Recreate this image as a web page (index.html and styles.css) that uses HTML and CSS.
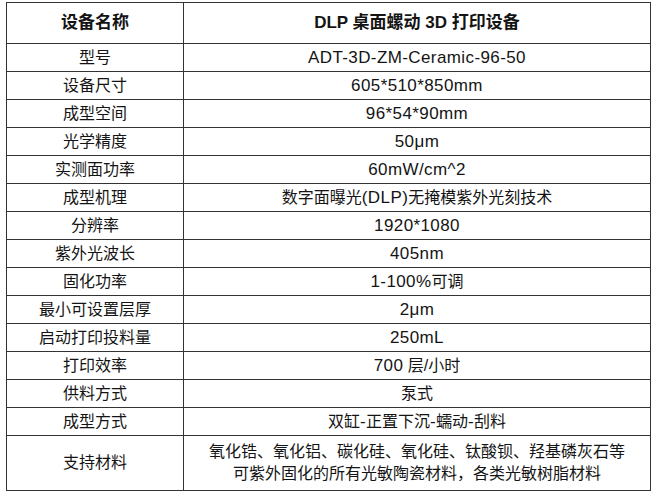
FILE: index.html
```html
<!DOCTYPE html>
<html lang="zh">
<head>
<meta charset="utf-8">
<link rel="stylesheet" href="styles.css">
</head>
<body>
<table class="spec">
  <tr class="head"><th class="k">设备名称</th><th class="v">DLP 桌面螺动 3D 打印设备</th></tr>
  <tr><td class="k">型号</td><td class="v"><span class="en">ADT-3D-ZM-Ceramic-96-50</span></td></tr>
  <tr><td class="k">设备尺寸</td><td class="v"><span class="en">605*510*850mm</span></td></tr>
  <tr><td class="k">成型空间</td><td class="v"><span class="en">96*54*90mm</span></td></tr>
  <tr><td class="k">光学精度</td><td class="v"><span class="en">50μm</span></td></tr>
  <tr><td class="k">实测面功率</td><td class="v"><span class="en">60mW/cm^2</span></td></tr>
  <tr><td class="k">成型机理</td><td class="v">数字面曝光<span class="en">(DLP)</span>无掩模紫外光刻技术</td></tr>
  <tr><td class="k">分辨率</td><td class="v"><span class="en">1920*1080</span></td></tr>
  <tr><td class="k">紫外光波长</td><td class="v"><span class="en">405nm</span></td></tr>
  <tr><td class="k">固化功率</td><td class="v"><span class="en">1-100%</span>可调</td></tr>
  <tr><td class="k">最小可设置层厚</td><td class="v"><span class="en">2μm</span></td></tr>
  <tr><td class="k">启动打印投料量</td><td class="v"><span class="en">250mL</span></td></tr>
  <tr><td class="k">打印效率</td><td class="v"><span class="en">700</span> 层/小时</td></tr>
  <tr><td class="k">供料方式</td><td class="v">泵式</td></tr>
  <tr><td class="k">成型方式</td><td class="v">双缸<span class="en">-</span>正置下沉<span class="en">-</span>蠕动<span class="en">-</span>刮料</td></tr>
  <tr class="tall"><td class="k">支持材料</td><td class="v">氧化锆、氧化铝、碳化硅、氧化硅、钛酸钡、羟基磷灰石等<br>可紫外固化的所有光敏陶瓷材料，各类光敏树脂材料</td></tr>
</table>
</body>
</html>
```
FILE: styles.css
```css
html, body {
  margin: 0;
  padding: 0;
  background: #ffffff;
}
body {
  padding: 2px 0 0 6px;
  font-family: "Liberation Sans", "Noto Sans CJK SC", sans-serif;
  color: #141414;
}
.spec {
  border-collapse: collapse;
  width: 645px;
  table-layout: fixed;
}
.spec th, .spec td {
  border: 1px solid #333333;
  padding: 0;
  text-align: center;
  vertical-align: middle;
  font-size: 16px;
  font-weight: normal;
  height: 27px;
  line-height: 22px;
}
.spec .k {
  width: 176px;
}
.spec .head th {
  height: 40px;
  font-size: 17px;
  font-weight: bold;
}
.spec .tall td {
  height: 54px;
}
.en {
  font-size: 17px;
  letter-spacing: 0.4px;
}
```
